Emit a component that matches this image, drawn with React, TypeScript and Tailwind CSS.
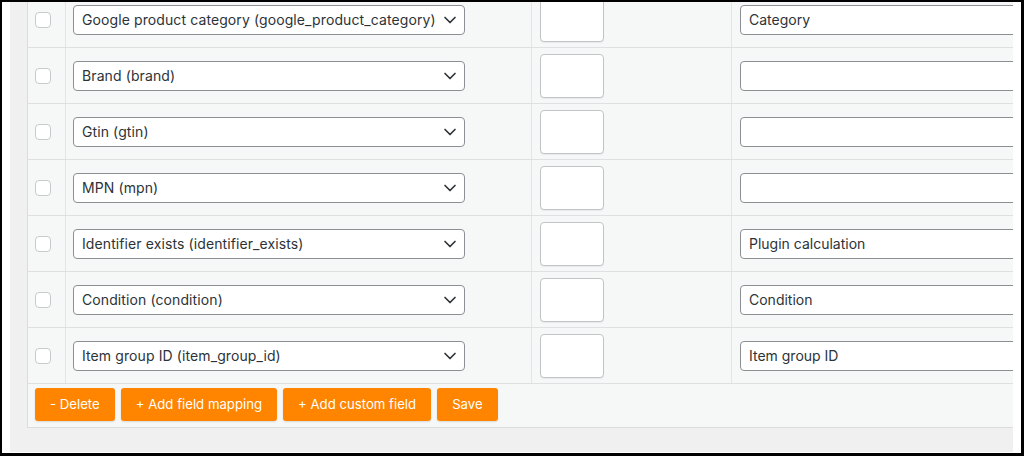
import { ChevronDown } from "lucide-react";

const rows = [
	{ field: "Google product category (google_product_category)", value: "Category" },
	{ field: "Brand (brand)", value: "" },
	{ field: "Gtin (gtin)", value: "" },
	{ field: "MPN (mpn)", value: "" },
	{ field: "Identifier exists (identifier_exists)", value: "Plugin calculation" },
	{ field: "Condition (condition)", value: "Condition" },
	{ field: "Item group ID (item_group_id)", value: "Item group ID" },
];

const buttons = ["- Delete", "+ Add field mapping", "+ Add custom field", "Save"];

export default function App() {
	return (
		<div className="h-[456px] w-[1024px] border-t-2 border-r-[3px] border-b-[3px] border-l-2 border-black bg-white px-2 pb-px font-['Inter',sans-serif] text-[14px] text-[#2c3338]">
			<div className="h-full overflow-hidden bg-[#f0f0f1] pl-[17px]">
				<div className="-mt-[10px] w-[1100px] border-b border-l border-[#dcdcde] bg-[#f6f7f7]">
					{rows.map((row) => (
						<div key={row.field} className="flex h-[56px] items-stretch border-b border-[#e0e0e2]">
							<div className="flex w-[38px] items-center border-r border-[#e4e4e6] pl-[7px]">
								<span className="block h-4 w-4 rounded-[4px] border border-[#c8c9cc] bg-white" />
							</div>
							<div className="flex w-[466px] items-center border-r border-[#e4e4e6] pl-[7px]">
								<div className="flex h-[30px] w-[392px] items-center justify-between rounded-[4px] border border-[#8c8f94] bg-white pr-[4px] pl-2">
									<span className="tracking-[0.1px]">{row.field}</span>
									<ChevronDown size={20} strokeWidth={2} className="text-[#2c3338]" />
								</div>
							</div>
							<div className="flex w-[200px] items-center border-r border-[#e4e4e6] pl-2">
								<div className="h-[44px] w-[64px] rounded-[4px] border border-[#c3c4c7] bg-white shadow-[0_1px_1px_rgba(0,0,0,0.06)]" />
							</div>
							<div className="flex flex-1 items-center pl-2">
								<div className="flex h-[30px] w-[320px] items-center rounded-[4px] border border-[#8c8f94] bg-white pl-2">
									{row.value}
								</div>
							</div>
						</div>
					))}
					<div className="flex h-[43px] gap-1.5 pt-1 pl-[7px]">
						{buttons.map((label) => (
							<button key={label} className="h-[33px] rounded-[3px] bg-[#ff8500] px-[15px] text-[13.2px] text-white shadow-[0_1px_2px_rgba(0,0,0,0.12)]">
								{label}
							</button>
						))}
					</div>
				</div>
			</div>
		</div>
	);
}
